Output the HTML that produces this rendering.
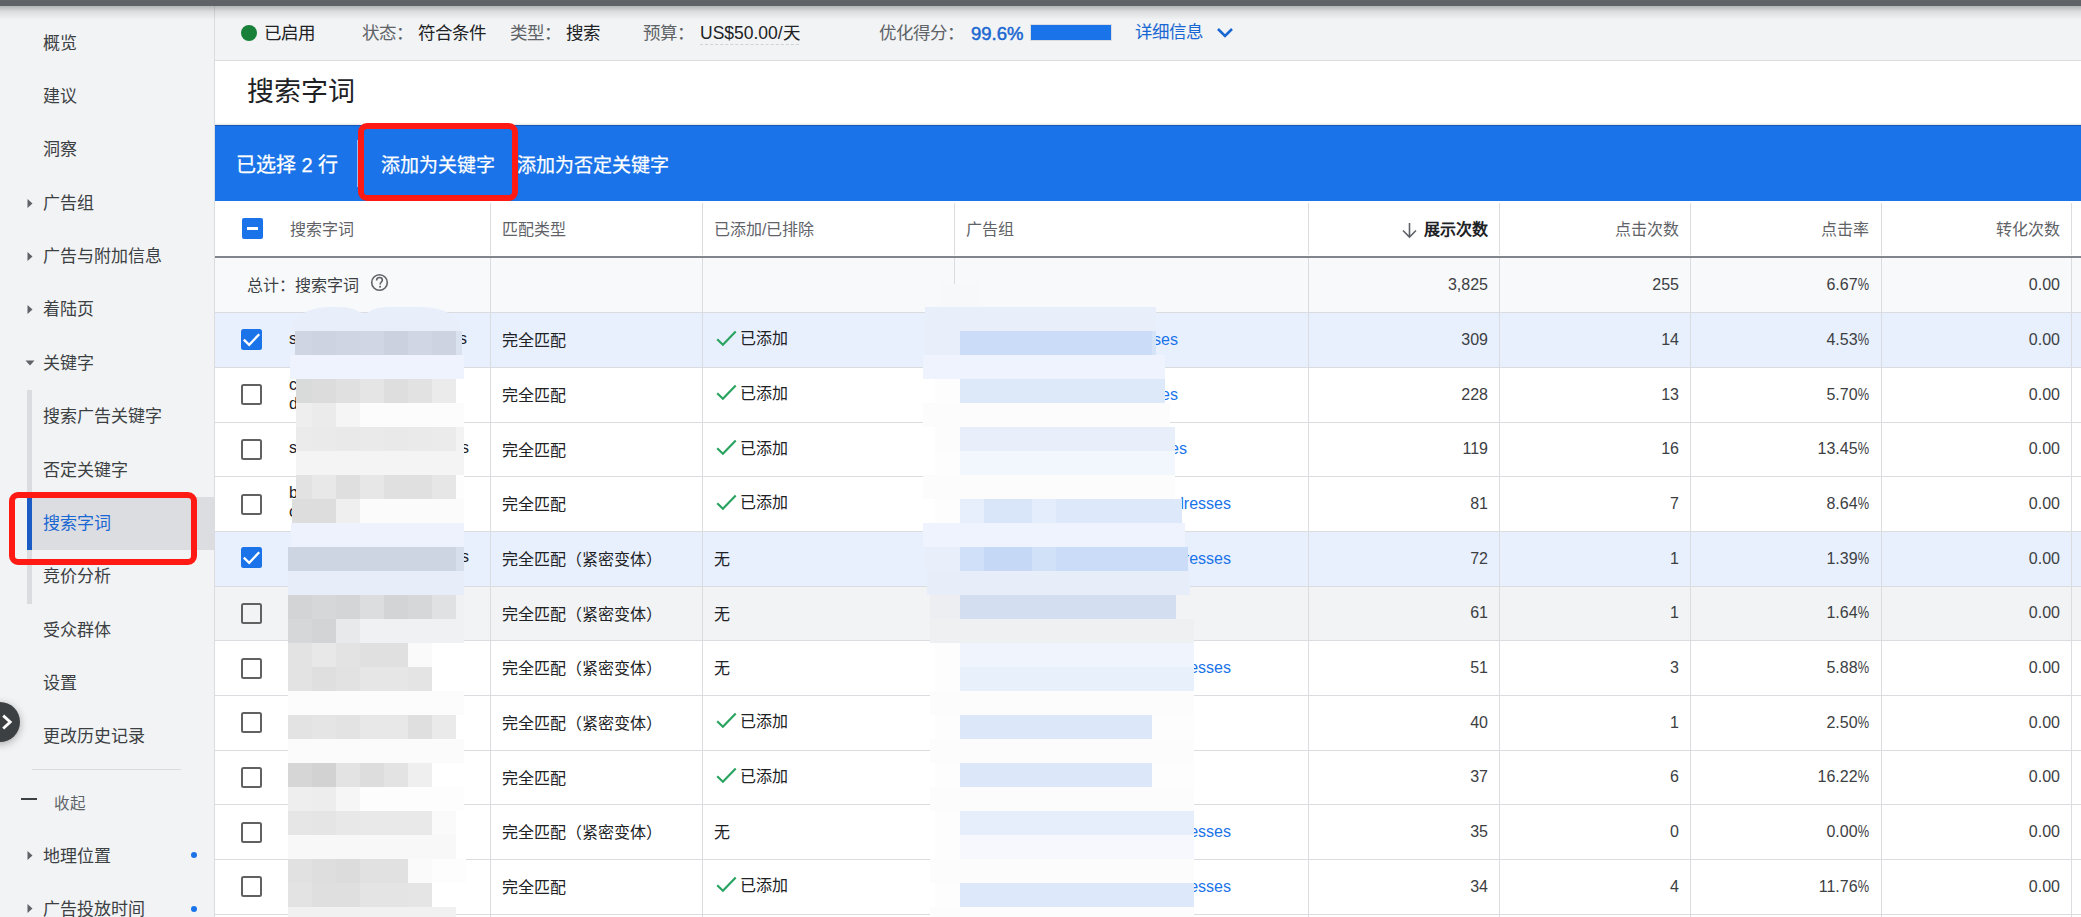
<!DOCTYPE html>
<html lang="zh-CN"><head><meta charset="utf-8"><style>
html,body{margin:0;padding:0;}
body{width:2081px;height:917px;overflow:hidden;position:relative;background:#f1f3f4;font-family:"Liberation Sans", sans-serif;}
.t{position:absolute;line-height:1;white-space:nowrap;}
.r{position:absolute;}
</style></head><body>

<div class="r" style="left:215px;top:61px;width:1866px;height:64px;background:#ffffff;"></div>
<div class="r" style="left:215px;top:60px;width:1866px;height:1px;background:#dadce0;"></div>
<div class="r" style="left:214px;top:6px;width:1px;height:911px;background:#dadce0;"></div>
<div class="r" style="left:215px;top:125px;width:1866px;height:76px;background:#1a73e8;"></div>
<div class="r" style="left:215px;top:125px;width:1866px;height:1px;background:#1559b8;"></div>
<div class="r" style="left:215px;top:123px;width:1866px;height:2px;background:linear-gradient(to bottom, rgba(0,0,0,0), rgba(0,0,0,0.12));"></div>
<div class="r" style="left:215px;top:201px;width:1866px;height:55px;background:#ffffff;"></div>
<div class="r" style="left:215px;top:256px;width:1866px;height:2px;background:#80868b;"></div>
<div class="r" style="left:215px;top:258px;width:1866px;height:54px;background:#f8f9fa;"></div>
<div class="r" style="left:215px;top:312px;width:1866px;height:55px;background:#e8f0fe;"></div>
<div class="r" style="left:215px;top:312px;width:1866px;height:1px;background:#dadce0;"></div>
<div class="r" style="left:215px;top:367px;width:1866px;height:55px;background:#ffffff;"></div>
<div class="r" style="left:215px;top:367px;width:1866px;height:1px;background:#dadce0;"></div>
<div class="r" style="left:215px;top:422px;width:1866px;height:54px;background:#ffffff;"></div>
<div class="r" style="left:215px;top:422px;width:1866px;height:1px;background:#dadce0;"></div>
<div class="r" style="left:215px;top:476px;width:1866px;height:55px;background:#ffffff;"></div>
<div class="r" style="left:215px;top:476px;width:1866px;height:1px;background:#dadce0;"></div>
<div class="r" style="left:215px;top:531px;width:1866px;height:55px;background:#e8f0fe;"></div>
<div class="r" style="left:215px;top:531px;width:1866px;height:1px;background:#dadce0;"></div>
<div class="r" style="left:215px;top:586px;width:1866px;height:54px;background:#f1f3f4;"></div>
<div class="r" style="left:215px;top:586px;width:1866px;height:1px;background:#dadce0;"></div>
<div class="r" style="left:215px;top:640px;width:1866px;height:55px;background:#ffffff;"></div>
<div class="r" style="left:215px;top:640px;width:1866px;height:1px;background:#dadce0;"></div>
<div class="r" style="left:215px;top:695px;width:1866px;height:55px;background:#ffffff;"></div>
<div class="r" style="left:215px;top:695px;width:1866px;height:1px;background:#dadce0;"></div>
<div class="r" style="left:215px;top:750px;width:1866px;height:54px;background:#ffffff;"></div>
<div class="r" style="left:215px;top:750px;width:1866px;height:1px;background:#dadce0;"></div>
<div class="r" style="left:215px;top:804px;width:1866px;height:55px;background:#ffffff;"></div>
<div class="r" style="left:215px;top:804px;width:1866px;height:1px;background:#dadce0;"></div>
<div class="r" style="left:215px;top:859px;width:1866px;height:55px;background:#ffffff;"></div>
<div class="r" style="left:215px;top:859px;width:1866px;height:1px;background:#dadce0;"></div>
<div class="r" style="left:215px;top:914px;width:1866px;height:54px;background:#ffffff;"></div>
<div class="r" style="left:215px;top:914px;width:1866px;height:1px;background:#dadce0;"></div>
<div class="r" style="left:490px;top:203px;width:1px;height:52px;background:#dadce0;"></div>
<div class="r" style="left:490px;top:258px;width:1px;height:659px;background:#dadce0;"></div>
<div class="r" style="left:702px;top:203px;width:1px;height:52px;background:#dadce0;"></div>
<div class="r" style="left:702px;top:258px;width:1px;height:659px;background:#dadce0;"></div>
<div class="r" style="left:954px;top:203px;width:1px;height:52px;background:#dadce0;"></div>
<div class="r" style="left:954px;top:258px;width:1px;height:659px;background:#dadce0;"></div>
<div class="r" style="left:1308px;top:203px;width:1px;height:52px;background:#dadce0;"></div>
<div class="r" style="left:1308px;top:258px;width:1px;height:659px;background:#dadce0;"></div>
<div class="r" style="left:1499px;top:203px;width:1px;height:52px;background:#dadce0;"></div>
<div class="r" style="left:1499px;top:258px;width:1px;height:659px;background:#dadce0;"></div>
<div class="r" style="left:1690px;top:203px;width:1px;height:52px;background:#dadce0;"></div>
<div class="r" style="left:1690px;top:258px;width:1px;height:659px;background:#dadce0;"></div>
<div class="r" style="left:1881px;top:203px;width:1px;height:52px;background:#dadce0;"></div>
<div class="r" style="left:1881px;top:258px;width:1px;height:659px;background:#dadce0;"></div>
<div class="r" style="left:2071px;top:203px;width:1px;height:52px;background:#dadce0;"></div>
<div class="r" style="left:2071px;top:258px;width:1px;height:659px;background:#dadce0;"></div>
<div class="r" style="left:0px;top:0px;width:2081px;height:6px;background:#5f6368;"></div>
<div class="r" style="left:0px;top:6px;width:2081px;height:14px;background:linear-gradient(to bottom, rgba(60,64,67,0.35), rgba(60,64,67,0.12) 40%, rgba(60,64,67,0));"></div>
<div class="r" style="left:241px;top:25px;width:16px;height:16px;border-radius:50%;background:#188038"></div>
<div class="t" style="left:264px;top:25px;font-size:17.5px;color:#202124;">已启用</div>
<div class="t" style="left:362px;top:25px;font-size:17.5px;color:#5f6368;">状态：</div>
<div class="t" style="left:418px;top:25px;font-size:17.5px;color:#202124;">符合条件</div>
<div class="t" style="left:510px;top:25px;font-size:17.5px;color:#5f6368;">类型：</div>
<div class="t" style="left:566px;top:25px;font-size:17.5px;color:#202124;">搜索</div>
<div class="t" style="left:643px;top:25px;font-size:17.5px;color:#5f6368;">预算：</div>
<div class="t" style="left:700px;top:25px;font-size:17.5px;color:#202124;">US$50.00/天</div>
<div class="r" style="left:700px;top:44px;width:99px;height:0;border-top:1px dashed #cfd2d6"></div>
<div class="t" style="left:879px;top:25px;font-size:17.5px;color:#5f6368;">优化得分：</div>
<div class="t" style="left:971px;top:24.5px;font-size:18.5px;color:#1967d2;-webkit-text-stroke:0.5px #1967d2;">99.6%</div>
<div class="r" style="left:1030px;top:24px;width:80px;height:15px;border:1px solid #dadce0;background:#1a73e8"></div>
<div class="t" style="left:1135px;top:24px;font-size:17.5px;color:#1967d2;">详细信息</div>
<svg class="r" style="left:1215px;top:26px" width="20" height="14" viewBox="0 0 20 14"><path d="M3 3 L10 10 L17 3" fill="none" stroke="#1967d2" stroke-width="2.6"/></svg>
<div class="t" style="left:247px;top:79px;font-size:27px;color:#202124;">搜索字词</div>
<div class="t" style="left:236px;top:154.5px;font-size:20px;color:#ffffff;-webkit-text-stroke:0.25px #fff;">已选择 2 行</div>
<div class="r" style="left:357px;top:140px;width:1px;height:47px;background:rgba(255,255,255,0.55);"></div>
<div class="t" style="left:381px;top:155.5px;font-size:19px;color:#ffffff;-webkit-text-stroke:0.25px #fff;">添加为关键字</div>
<div class="t" style="left:517px;top:155.5px;font-size:19px;color:#ffffff;-webkit-text-stroke:0.25px #fff;">添加为否定关键字</div>
<div class="r" style="left:358px;top:123px;width:148px;height:66px;border:6px solid #ff1a14;border-radius:9px"></div>
<div class="r" style="left:242px;top:218px;width:21px;height:21px;border-radius:2px;background:#1a73e8"></div>
<div class="r" style="left:247px;top:227px;width:11px;height:3px;background:#ffffff;"></div>
<div class="t" style="left:290px;top:222px;font-size:16px;color:#5f6368;">搜索字词</div>
<div class="t" style="left:502px;top:222px;font-size:16px;color:#5f6368;">匹配类型</div>
<div class="t" style="left:714px;top:222px;font-size:16px;color:#5f6368;">已添加/已排除</div>
<div class="t" style="left:966px;top:222px;font-size:16px;color:#5f6368;">广告组</div>
<svg class="r" style="left:1401px;top:221px" width="17" height="18" viewBox="0 0 17 18"><path d="M8.5 2 V16 M2 9.5 L8.5 16 L15 9.5" fill="none" stroke="#5f6368" stroke-width="1.6"/></svg>
<div class="t" style="right:593px;top:222px;font-size:16px;color:#202124;text-align:right;font-weight:bold;">展示次数</div>
<div class="t" style="right:402px;top:222px;font-size:16px;color:#5f6368;text-align:right;">点击次数</div>
<div class="t" style="right:212px;top:222px;font-size:16px;color:#5f6368;text-align:right;">点击率</div>
<div class="t" style="right:21px;top:222px;font-size:16px;color:#5f6368;text-align:right;">转化次数</div>
<div class="t" style="left:247px;top:278px;font-size:16px;color:#3c4043;">总计：搜索字词</div>
<svg class="r" style="left:370px;top:273px" width="19" height="19" viewBox="0 0 19 19"><circle cx="9.5" cy="9.5" r="7.8" fill="none" stroke="#5f6368" stroke-width="1.6"/><path d="M6.6 7.4 C6.6 5.6 7.9 4.5 9.5 4.5 C11.1 4.5 12.4 5.6 12.4 7.1 C12.4 8.9 10.1 9.1 10.1 11.4" fill="none" stroke="#5f6368" stroke-width="1.6"/><rect x="9.2" y="12.8" width="1.8" height="1.8" fill="#5f6368"/></svg>
<div class="t" style="right:593px;top:277px;font-size:16px;color:#3c4043;text-align:right;">3,825</div>
<div class="t" style="right:402px;top:277px;font-size:16px;color:#3c4043;text-align:right;">255</div>
<div class="t" style="right:212px;top:277px;font-size:16px;color:#3c4043;text-align:right;">6.67<span style="display:inline-block;transform:scaleX(0.8);transform-origin:100% 50%;margin-left:-2.8px">%</span></div>
<div class="t" style="right:21px;top:277px;font-size:16px;color:#3c4043;text-align:right;">0.00</div>
<svg class="r" style="left:241px;top:329px" width="21" height="21" viewBox="0 0 21 21"><rect x="0" y="0" width="21" height="21" rx="2.5" fill="#1a73e8"/><path d="M2.8 10.6 L8.2 15.8 L18.2 5.2" fill="none" stroke="#fff" stroke-width="2.3"/></svg>
<div class="t" style="left:502px;top:333px;font-size:16px;color:#202124;">完全匹配</div>
<svg class="r" style="left:715px;top:330px" width="24" height="18" viewBox="0 0 24 18"><path d="M2.2 9.3 L7.9 14.7 L20.7 1.6" fill="none" stroke="#29a35f" stroke-width="2.2"/></svg>
<div class="t" style="left:740px;top:331px;font-size:16px;color:#202124;">已添加</div>
<div class="t" style="right:593px;top:332px;font-size:16px;color:#3c4043;text-align:right;">309</div>
<div class="t" style="right:402px;top:332px;font-size:16px;color:#3c4043;text-align:right;">14</div>
<div class="t" style="right:212px;top:332px;font-size:16px;color:#3c4043;text-align:right;">4.53<span style="display:inline-block;transform:scaleX(0.8);transform-origin:100% 50%;margin-left:-2.8px">%</span></div>
<div class="t" style="right:21px;top:332px;font-size:16px;color:#3c4043;text-align:right;">0.00</div>
<div class="r" style="left:241px;top:384px;width:17px;height:17px;border:2px solid #616161;border-radius:2.5px"></div>
<div class="t" style="left:502px;top:388px;font-size:16px;color:#202124;">完全匹配</div>
<svg class="r" style="left:715px;top:384px" width="24" height="18" viewBox="0 0 24 18"><path d="M2.2 9.3 L7.9 14.7 L20.7 1.6" fill="none" stroke="#29a35f" stroke-width="2.2"/></svg>
<div class="t" style="left:740px;top:386px;font-size:16px;color:#202124;">已添加</div>
<div class="t" style="right:593px;top:387px;font-size:16px;color:#3c4043;text-align:right;">228</div>
<div class="t" style="right:402px;top:387px;font-size:16px;color:#3c4043;text-align:right;">13</div>
<div class="t" style="right:212px;top:387px;font-size:16px;color:#3c4043;text-align:right;">5.70<span style="display:inline-block;transform:scaleX(0.8);transform-origin:100% 50%;margin-left:-2.8px">%</span></div>
<div class="t" style="right:21px;top:387px;font-size:16px;color:#3c4043;text-align:right;">0.00</div>
<div class="r" style="left:241px;top:439px;width:17px;height:17px;border:2px solid #616161;border-radius:2.5px"></div>
<div class="t" style="left:502px;top:443px;font-size:16px;color:#202124;">完全匹配</div>
<svg class="r" style="left:715px;top:439px" width="24" height="18" viewBox="0 0 24 18"><path d="M2.2 9.3 L7.9 14.7 L20.7 1.6" fill="none" stroke="#29a35f" stroke-width="2.2"/></svg>
<div class="t" style="left:740px;top:441px;font-size:16px;color:#202124;">已添加</div>
<div class="t" style="right:593px;top:441px;font-size:16px;color:#3c4043;text-align:right;">119</div>
<div class="t" style="right:402px;top:441px;font-size:16px;color:#3c4043;text-align:right;">16</div>
<div class="t" style="right:212px;top:441px;font-size:16px;color:#3c4043;text-align:right;">13.45<span style="display:inline-block;transform:scaleX(0.8);transform-origin:100% 50%;margin-left:-2.8px">%</span></div>
<div class="t" style="right:21px;top:441px;font-size:16px;color:#3c4043;text-align:right;">0.00</div>
<div class="r" style="left:241px;top:494px;width:17px;height:17px;border:2px solid #616161;border-radius:2.5px"></div>
<div class="t" style="left:502px;top:497px;font-size:16px;color:#202124;">完全匹配</div>
<svg class="r" style="left:715px;top:494px" width="24" height="18" viewBox="0 0 24 18"><path d="M2.2 9.3 L7.9 14.7 L20.7 1.6" fill="none" stroke="#29a35f" stroke-width="2.2"/></svg>
<div class="t" style="left:740px;top:495px;font-size:16px;color:#202124;">已添加</div>
<div class="t" style="right:593px;top:496px;font-size:16px;color:#3c4043;text-align:right;">81</div>
<div class="t" style="right:402px;top:496px;font-size:16px;color:#3c4043;text-align:right;">7</div>
<div class="t" style="right:212px;top:496px;font-size:16px;color:#3c4043;text-align:right;">8.64<span style="display:inline-block;transform:scaleX(0.8);transform-origin:100% 50%;margin-left:-2.8px">%</span></div>
<div class="t" style="right:21px;top:496px;font-size:16px;color:#3c4043;text-align:right;">0.00</div>
<svg class="r" style="left:241px;top:547px" width="21" height="21" viewBox="0 0 21 21"><rect x="0" y="0" width="21" height="21" rx="2.5" fill="#1a73e8"/><path d="M2.8 10.6 L8.2 15.8 L18.2 5.2" fill="none" stroke="#fff" stroke-width="2.3"/></svg>
<div class="t" style="left:502px;top:552px;font-size:16px;color:#202124;">完全匹配（紧密变体）</div>
<div class="t" style="left:714px;top:552px;font-size:16px;color:#202124;">无</div>
<div class="t" style="right:593px;top:551px;font-size:16px;color:#3c4043;text-align:right;">72</div>
<div class="t" style="right:402px;top:551px;font-size:16px;color:#3c4043;text-align:right;">1</div>
<div class="t" style="right:212px;top:551px;font-size:16px;color:#3c4043;text-align:right;">1.39<span style="display:inline-block;transform:scaleX(0.8);transform-origin:100% 50%;margin-left:-2.8px">%</span></div>
<div class="t" style="right:21px;top:551px;font-size:16px;color:#3c4043;text-align:right;">0.00</div>
<div class="r" style="left:241px;top:603px;width:17px;height:17px;border:2px solid #616161;border-radius:2.5px"></div>
<div class="t" style="left:502px;top:607px;font-size:16px;color:#202124;">完全匹配（紧密变体）</div>
<div class="t" style="left:714px;top:607px;font-size:16px;color:#202124;">无</div>
<div class="t" style="right:593px;top:605px;font-size:16px;color:#3c4043;text-align:right;">61</div>
<div class="t" style="right:402px;top:605px;font-size:16px;color:#3c4043;text-align:right;">1</div>
<div class="t" style="right:212px;top:605px;font-size:16px;color:#3c4043;text-align:right;">1.64<span style="display:inline-block;transform:scaleX(0.8);transform-origin:100% 50%;margin-left:-2.8px">%</span></div>
<div class="t" style="right:21px;top:605px;font-size:16px;color:#3c4043;text-align:right;">0.00</div>
<div class="r" style="left:241px;top:658px;width:17px;height:17px;border:2px solid #616161;border-radius:2.5px"></div>
<div class="t" style="left:502px;top:661px;font-size:16px;color:#202124;">完全匹配（紧密变体）</div>
<div class="t" style="left:714px;top:661px;font-size:16px;color:#202124;">无</div>
<div class="t" style="right:593px;top:660px;font-size:16px;color:#3c4043;text-align:right;">51</div>
<div class="t" style="right:402px;top:660px;font-size:16px;color:#3c4043;text-align:right;">3</div>
<div class="t" style="right:212px;top:660px;font-size:16px;color:#3c4043;text-align:right;">5.88<span style="display:inline-block;transform:scaleX(0.8);transform-origin:100% 50%;margin-left:-2.8px">%</span></div>
<div class="t" style="right:21px;top:660px;font-size:16px;color:#3c4043;text-align:right;">0.00</div>
<div class="r" style="left:241px;top:712px;width:17px;height:17px;border:2px solid #616161;border-radius:2.5px"></div>
<div class="t" style="left:502px;top:716px;font-size:16px;color:#202124;">完全匹配（紧密变体）</div>
<svg class="r" style="left:715px;top:712px" width="24" height="18" viewBox="0 0 24 18"><path d="M2.2 9.3 L7.9 14.7 L20.7 1.6" fill="none" stroke="#29a35f" stroke-width="2.2"/></svg>
<div class="t" style="left:740px;top:714px;font-size:16px;color:#202124;">已添加</div>
<div class="t" style="right:593px;top:715px;font-size:16px;color:#3c4043;text-align:right;">40</div>
<div class="t" style="right:402px;top:715px;font-size:16px;color:#3c4043;text-align:right;">1</div>
<div class="t" style="right:212px;top:715px;font-size:16px;color:#3c4043;text-align:right;">2.50<span style="display:inline-block;transform:scaleX(0.8);transform-origin:100% 50%;margin-left:-2.8px">%</span></div>
<div class="t" style="right:21px;top:715px;font-size:16px;color:#3c4043;text-align:right;">0.00</div>
<div class="r" style="left:241px;top:767px;width:17px;height:17px;border:2px solid #616161;border-radius:2.5px"></div>
<div class="t" style="left:502px;top:771px;font-size:16px;color:#202124;">完全匹配</div>
<svg class="r" style="left:715px;top:767px" width="24" height="18" viewBox="0 0 24 18"><path d="M2.2 9.3 L7.9 14.7 L20.7 1.6" fill="none" stroke="#29a35f" stroke-width="2.2"/></svg>
<div class="t" style="left:740px;top:769px;font-size:16px;color:#202124;">已添加</div>
<div class="t" style="right:593px;top:769px;font-size:16px;color:#3c4043;text-align:right;">37</div>
<div class="t" style="right:402px;top:769px;font-size:16px;color:#3c4043;text-align:right;">6</div>
<div class="t" style="right:212px;top:769px;font-size:16px;color:#3c4043;text-align:right;">16.22<span style="display:inline-block;transform:scaleX(0.8);transform-origin:100% 50%;margin-left:-2.8px">%</span></div>
<div class="t" style="right:21px;top:769px;font-size:16px;color:#3c4043;text-align:right;">0.00</div>
<div class="r" style="left:241px;top:822px;width:17px;height:17px;border:2px solid #616161;border-radius:2.5px"></div>
<div class="t" style="left:502px;top:825px;font-size:16px;color:#202124;">完全匹配（紧密变体）</div>
<div class="t" style="left:714px;top:825px;font-size:16px;color:#202124;">无</div>
<div class="t" style="right:593px;top:824px;font-size:16px;color:#3c4043;text-align:right;">35</div>
<div class="t" style="right:402px;top:824px;font-size:16px;color:#3c4043;text-align:right;">0</div>
<div class="t" style="right:212px;top:824px;font-size:16px;color:#3c4043;text-align:right;">0.00<span style="display:inline-block;transform:scaleX(0.8);transform-origin:100% 50%;margin-left:-2.8px">%</span></div>
<div class="t" style="right:21px;top:824px;font-size:16px;color:#3c4043;text-align:right;">0.00</div>
<div class="r" style="left:241px;top:876px;width:17px;height:17px;border:2px solid #616161;border-radius:2.5px"></div>
<div class="t" style="left:502px;top:880px;font-size:16px;color:#202124;">完全匹配</div>
<svg class="r" style="left:715px;top:876px" width="24" height="18" viewBox="0 0 24 18"><path d="M2.2 9.3 L7.9 14.7 L20.7 1.6" fill="none" stroke="#29a35f" stroke-width="2.2"/></svg>
<div class="t" style="left:740px;top:878px;font-size:16px;color:#202124;">已添加</div>
<div class="t" style="right:593px;top:879px;font-size:16px;color:#3c4043;text-align:right;">34</div>
<div class="t" style="right:402px;top:879px;font-size:16px;color:#3c4043;text-align:right;">4</div>
<div class="t" style="right:212px;top:879px;font-size:16px;color:#3c4043;text-align:right;">11.76<span style="display:inline-block;transform:scaleX(0.8);transform-origin:100% 50%;margin-left:-2.8px">%</span></div>
<div class="t" style="right:21px;top:879px;font-size:16px;color:#3c4043;text-align:right;">0.00</div>
<div class="t" style="left:289px;top:331px;font-size:16px;color:#202124">s</div>
<div class="t" style="left:459px;top:331px;font-size:16px;color:#202124">s</div>
<div class="t" style="left:289px;top:377px;font-size:16px;color:#202124">c</div>
<div class="t" style="left:289px;top:396px;font-size:16px;color:#202124">d</div>
<div class="t" style="left:289px;top:440px;font-size:16px;color:#202124">s</div>
<div class="t" style="left:461px;top:440px;font-size:16px;color:#202124">s</div>
<div class="t" style="left:289px;top:485px;font-size:16px;color:#202124">b</div>
<div class="t" style="left:289px;top:504px;font-size:16px;color:#202124">c</div>
<div class="t" style="left:461px;top:549px;font-size:16px;color:#202124">s</div>
<div class="t" style="right:903px;top:332px;font-size:16px;color:#1a73e8">dresses</div>
<div class="t" style="right:903px;top:387px;font-size:16px;color:#1a73e8">dresses</div>
<div class="t" style="right:894px;top:441px;font-size:16px;color:#1a73e8">dresses</div>
<div class="t" style="right:850px;top:496px;font-size:16px;color:#1a73e8">dresses</div>
<div class="t" style="right:850px;top:551px;font-size:16px;color:#1a73e8">dresses</div>
<div class="t" style="right:850px;top:660px;font-size:16px;color:#1a73e8">dresses</div>
<div class="t" style="right:850px;top:824px;font-size:16px;color:#1a73e8">dresses</div>
<div class="t" style="right:850px;top:879px;font-size:16px;color:#1a73e8">dresses</div>
<div class="r" style="left:291px;top:307px;width:78px;height:24px;background:#e9effa;border-radius:38px 30px 0 0/24px 18px 0 0"></div>
<div class="r" style="left:360px;top:307px;width:102px;height:24px;background:#e9effa;border-radius:26px 40px 0 0/20px 24px 0 0"></div>
<div class="r" style="left:940px;top:284px;width:40px;height:23px;background:#f7f8f9;"></div>
<div class="r" style="left:295px;top:331px;width:17px;height:24px;background:#cfd5e2;"></div>
<div class="r" style="left:312px;top:331px;width:24px;height:24px;background:#cdd3e0;"></div>
<div class="r" style="left:336px;top:331px;width:24px;height:24px;background:#cfd5e2;"></div>
<div class="r" style="left:360px;top:331px;width:24px;height:24px;background:#d0d6e3;"></div>
<div class="r" style="left:384px;top:331px;width:24px;height:24px;background:#cbd1df;"></div>
<div class="r" style="left:408px;top:331px;width:24px;height:24px;background:#d0d6e3;"></div>
<div class="r" style="left:432px;top:331px;width:24px;height:24px;background:#cdd3e0;"></div>
<div class="r" style="left:456px;top:331px;width:6px;height:24px;background:#dbe2ef;"></div>
<div class="r" style="left:290px;top:355px;width:174px;height:24px;background:#eef3fd;"></div>
<div class="r" style="left:296px;top:379px;width:16px;height:24px;background:#d9dbda;"></div>
<div class="r" style="left:312px;top:379px;width:24px;height:24px;background:#dcdcdc;"></div>
<div class="r" style="left:336px;top:379px;width:24px;height:24px;background:#e0e0e0;"></div>
<div class="r" style="left:360px;top:379px;width:24px;height:24px;background:#e5e5e5;"></div>
<div class="r" style="left:384px;top:379px;width:24px;height:24px;background:#dedede;"></div>
<div class="r" style="left:408px;top:379px;width:24px;height:24px;background:#e2e2e2;"></div>
<div class="r" style="left:432px;top:379px;width:24px;height:24px;background:#ebebeb;"></div>
<div class="r" style="left:296px;top:403px;width:16px;height:24px;background:#eeeeee;"></div>
<div class="r" style="left:312px;top:403px;width:24px;height:24px;background:#ebebeb;"></div>
<div class="r" style="left:336px;top:403px;width:24px;height:24px;background:#f5f5f5;"></div>
<div class="r" style="left:360px;top:403px;width:104px;height:24px;background:#fcfcfc;"></div>
<div class="r" style="left:296px;top:427px;width:16px;height:24px;background:#ebebeb;"></div>
<div class="r" style="left:312px;top:427px;width:24px;height:24px;background:#eaeaea;"></div>
<div class="r" style="left:336px;top:427px;width:24px;height:24px;background:#e8e9e8;"></div>
<div class="r" style="left:360px;top:427px;width:24px;height:24px;background:#eaeaea;"></div>
<div class="r" style="left:384px;top:427px;width:24px;height:24px;background:#e9e9e9;"></div>
<div class="r" style="left:408px;top:427px;width:24px;height:24px;background:#eaeaea;"></div>
<div class="r" style="left:432px;top:427px;width:24px;height:24px;background:#ebebeb;"></div>
<div class="r" style="left:456px;top:427px;width:8px;height:24px;background:#f3f3f3;"></div>
<div class="r" style="left:296px;top:451px;width:168px;height:24px;background:#f4f4f4;"></div>
<div class="r" style="left:296px;top:475px;width:16px;height:24px;background:#e2e2e2;"></div>
<div class="r" style="left:312px;top:475px;width:24px;height:24px;background:#e8e8e8;"></div>
<div class="r" style="left:336px;top:475px;width:24px;height:24px;background:#dfdfdf;"></div>
<div class="r" style="left:360px;top:475px;width:24px;height:24px;background:#e6e7e6;"></div>
<div class="r" style="left:384px;top:475px;width:24px;height:24px;background:#e0e0e0;"></div>
<div class="r" style="left:408px;top:475px;width:24px;height:24px;background:#e0e0e0;"></div>
<div class="r" style="left:432px;top:475px;width:24px;height:24px;background:#e6e6e6;"></div>
<div class="r" style="left:456px;top:475px;width:8px;height:24px;background:#fdfdfd;"></div>
<div class="r" style="left:292px;top:499px;width:44px;height:24px;background:#dcdddc;"></div>
<div class="r" style="left:336px;top:499px;width:24px;height:24px;background:#efefef;"></div>
<div class="r" style="left:360px;top:499px;width:104px;height:24px;background:#fbfbfb;"></div>
<div class="r" style="left:291px;top:523px;width:173px;height:24px;background:#edf2fc;"></div>
<div class="r" style="left:288px;top:547px;width:168px;height:24px;background:#cdd4e2;"></div>
<div class="r" style="left:456px;top:547px;width:8px;height:24px;background:#d8dfec;"></div>
<div class="r" style="left:288px;top:571px;width:176px;height:24px;background:#e8eef9;"></div>
<div class="r" style="left:288px;top:595px;width:24px;height:24px;background:#d3d4d6;"></div>
<div class="r" style="left:312px;top:595px;width:24px;height:24px;background:#d6d7d9;"></div>
<div class="r" style="left:336px;top:595px;width:24px;height:24px;background:#d4d5d7;"></div>
<div class="r" style="left:360px;top:595px;width:24px;height:24px;background:#dcdddf;"></div>
<div class="r" style="left:384px;top:595px;width:24px;height:24px;background:#d3d4d6;"></div>
<div class="r" style="left:408px;top:595px;width:24px;height:24px;background:#d6d7d9;"></div>
<div class="r" style="left:432px;top:595px;width:24px;height:24px;background:#e0e1e3;"></div>
<div class="r" style="left:456px;top:595px;width:8px;height:24px;background:#eff1f2;"></div>
<div class="r" style="left:288px;top:619px;width:24px;height:24px;background:#d6d7d9;"></div>
<div class="r" style="left:312px;top:619px;width:24px;height:24px;background:#d3d4d6;"></div>
<div class="r" style="left:336px;top:619px;width:24px;height:24px;background:#e8e9eb;"></div>
<div class="r" style="left:360px;top:619px;width:104px;height:24px;background:#f0f1f3;"></div>
<div class="r" style="left:288px;top:643px;width:24px;height:24px;background:#e3e3e3;"></div>
<div class="r" style="left:312px;top:643px;width:24px;height:24px;background:#e8e8e8;"></div>
<div class="r" style="left:336px;top:643px;width:24px;height:24px;background:#e3e3e3;"></div>
<div class="r" style="left:360px;top:643px;width:48px;height:24px;background:#dfe0df;"></div>
<div class="r" style="left:408px;top:643px;width:24px;height:24px;background:#fafafa;"></div>
<div class="r" style="left:288px;top:667px;width:24px;height:24px;background:#e3e3e3;"></div>
<div class="r" style="left:312px;top:667px;width:24px;height:24px;background:#dfdfdf;"></div>
<div class="r" style="left:336px;top:667px;width:24px;height:24px;background:#e2e2e2;"></div>
<div class="r" style="left:360px;top:667px;width:48px;height:24px;background:#e5e6e5;"></div>
<div class="r" style="left:408px;top:667px;width:24px;height:24px;background:#e4e4e4;"></div>
<div class="r" style="left:288px;top:691px;width:176px;height:24px;background:#fcfcfc;"></div>
<div class="r" style="left:288px;top:715px;width:24px;height:24px;background:#e3e3e3;"></div>
<div class="r" style="left:312px;top:715px;width:24px;height:24px;background:#e5e5e5;"></div>
<div class="r" style="left:336px;top:715px;width:24px;height:24px;background:#e3e3e3;"></div>
<div class="r" style="left:360px;top:715px;width:48px;height:24px;background:#e7e8e7;"></div>
<div class="r" style="left:408px;top:715px;width:24px;height:24px;background:#dfdfdf;"></div>
<div class="r" style="left:432px;top:715px;width:24px;height:24px;background:#e9eae9;"></div>
<div class="r" style="left:288px;top:739px;width:176px;height:24px;background:#fbfbfb;"></div>
<div class="r" style="left:288px;top:763px;width:24px;height:24px;background:#d6d6d6;"></div>
<div class="r" style="left:312px;top:763px;width:24px;height:24px;background:#d2d2d2;"></div>
<div class="r" style="left:336px;top:763px;width:24px;height:24px;background:#e3e3e3;"></div>
<div class="r" style="left:360px;top:763px;width:24px;height:24px;background:#dddddd;"></div>
<div class="r" style="left:384px;top:763px;width:24px;height:24px;background:#e3e3e3;"></div>
<div class="r" style="left:408px;top:763px;width:24px;height:24px;background:#efefef;"></div>
<div class="r" style="left:288px;top:787px;width:24px;height:24px;background:#eeeeee;"></div>
<div class="r" style="left:312px;top:787px;width:24px;height:24px;background:#ededed;"></div>
<div class="r" style="left:336px;top:787px;width:24px;height:24px;background:#f6f6f6;"></div>
<div class="r" style="left:360px;top:787px;width:104px;height:24px;background:#fdfdfd;"></div>
<div class="r" style="left:288px;top:811px;width:24px;height:24px;background:#e6e6e6;"></div>
<div class="r" style="left:312px;top:811px;width:24px;height:24px;background:#e5e5e5;"></div>
<div class="r" style="left:336px;top:811px;width:24px;height:24px;background:#e7e8e7;"></div>
<div class="r" style="left:360px;top:811px;width:72px;height:24px;background:#e9e9e9;"></div>
<div class="r" style="left:432px;top:811px;width:24px;height:24px;background:#fafafa;"></div>
<div class="r" style="left:288px;top:835px;width:168px;height:24px;background:#f8f8f8;"></div>
<div class="r" style="left:288px;top:859px;width:24px;height:24px;background:#e0e1e0;"></div>
<div class="r" style="left:312px;top:859px;width:24px;height:24px;background:#dedede;"></div>
<div class="r" style="left:336px;top:859px;width:24px;height:24px;background:#dcdcdc;"></div>
<div class="r" style="left:360px;top:859px;width:48px;height:24px;background:#e0e1e0;"></div>
<div class="r" style="left:408px;top:859px;width:24px;height:24px;background:#fafafa;"></div>
<div class="r" style="left:432px;top:859px;width:34px;height:24px;background:#fdfdfd;"></div>
<div class="r" style="left:288px;top:883px;width:24px;height:24px;background:#e3e3e3;"></div>
<div class="r" style="left:312px;top:883px;width:48px;height:24px;background:#dfdfdf;"></div>
<div class="r" style="left:360px;top:883px;width:48px;height:24px;background:#e3e4e3;"></div>
<div class="r" style="left:408px;top:883px;width:24px;height:24px;background:#e5e5e5;"></div>
<div class="r" style="left:288px;top:907px;width:168px;height:10px;background:#f1f1f1;"></div>
<div class="r" style="left:925px;top:307px;width:231px;height:24px;background:#e9effa;"></div>
<div class="r" style="left:925px;top:331px;width:35px;height:24px;background:#e8eefa;"></div>
<div class="r" style="left:960px;top:331px;width:192px;height:24px;background:#cadcf7;"></div>
<div class="r" style="left:1152px;top:331px;width:4px;height:24px;background:#d5e3f8;"></div>
<div class="r" style="left:923px;top:355px;width:242px;height:24px;background:#eef3fd;"></div>
<div class="r" style="left:935px;top:379px;width:25px;height:24px;background:#fdfdfd;"></div>
<div class="r" style="left:960px;top:379px;width:205px;height:24px;background:#dde8f9;"></div>
<div class="r" style="left:923px;top:403px;width:247px;height:24px;background:#fcfcfc;"></div>
<div class="r" style="left:935px;top:427px;width:25px;height:24px;background:#fcfcfc;"></div>
<div class="r" style="left:960px;top:427px;width:215px;height:24px;background:#e8effb;"></div>
<div class="r" style="left:935px;top:451px;width:25px;height:24px;background:#fdfdfd;"></div>
<div class="r" style="left:960px;top:451px;width:215px;height:24px;background:#f2f6fd;"></div>
<div class="r" style="left:923px;top:475px;width:252px;height:24px;background:#fcfcfc;"></div>
<div class="r" style="left:935px;top:499px;width:25px;height:24px;background:#fdfdfd;"></div>
<div class="r" style="left:960px;top:499px;width:24px;height:24px;background:#e6effb;"></div>
<div class="r" style="left:984px;top:499px;width:48px;height:24px;background:#d9e6f9;"></div>
<div class="r" style="left:1032px;top:499px;width:24px;height:24px;background:#e3edfb;"></div>
<div class="r" style="left:1056px;top:499px;width:126px;height:24px;background:#dde8fa;"></div>
<div class="r" style="left:923px;top:523px;width:262px;height:24px;background:#eef3fd;"></div>
<div class="r" style="left:925px;top:547px;width:35px;height:24px;background:#e8eefa;"></div>
<div class="r" style="left:960px;top:547px;width:24px;height:24px;background:#cfe0f8;"></div>
<div class="r" style="left:984px;top:547px;width:48px;height:24px;background:#c5d9f7;"></div>
<div class="r" style="left:1032px;top:547px;width:24px;height:24px;background:#d1e1f8;"></div>
<div class="r" style="left:1056px;top:547px;width:132px;height:24px;background:#cadcf7;"></div>
<div class="r" style="left:927px;top:571px;width:263px;height:24px;background:#e8eef9;"></div>
<div class="r" style="left:930px;top:595px;width:30px;height:24px;background:#eceef2;"></div>
<div class="r" style="left:960px;top:595px;width:216px;height:24px;background:#d3dff0;"></div>
<div class="r" style="left:930px;top:619px;width:264px;height:24px;background:#eef0f2;"></div>
<div class="r" style="left:935px;top:643px;width:25px;height:24px;background:#fdfdfd;"></div>
<div class="r" style="left:960px;top:643px;width:234px;height:24px;background:#f0f5fd;"></div>
<div class="r" style="left:935px;top:667px;width:25px;height:24px;background:#fdfdfd;"></div>
<div class="r" style="left:960px;top:667px;width:234px;height:24px;background:#e8f0fc;"></div>
<div class="r" style="left:930px;top:691px;width:264px;height:24px;background:#fcfcfc;"></div>
<div class="r" style="left:935px;top:715px;width:25px;height:24px;background:#fdfdfd;"></div>
<div class="r" style="left:960px;top:715px;width:192px;height:24px;background:#dce8fa;"></div>
<div class="r" style="left:1152px;top:715px;width:42px;height:24px;background:#fdfdfd;"></div>
<div class="r" style="left:930px;top:739px;width:264px;height:24px;background:#fcfcfc;"></div>
<div class="r" style="left:935px;top:763px;width:25px;height:24px;background:#fdfdfd;"></div>
<div class="r" style="left:960px;top:763px;width:192px;height:24px;background:#dce8fa;"></div>
<div class="r" style="left:1152px;top:763px;width:42px;height:24px;background:#fdfdfd;"></div>
<div class="r" style="left:930px;top:787px;width:264px;height:24px;background:#fcfcfc;"></div>
<div class="r" style="left:935px;top:811px;width:25px;height:24px;background:#fdfdfd;"></div>
<div class="r" style="left:960px;top:811px;width:234px;height:24px;background:#e6eefb;"></div>
<div class="r" style="left:935px;top:835px;width:25px;height:24px;background:#fdfdfd;"></div>
<div class="r" style="left:960px;top:835px;width:234px;height:24px;background:#f6f8fd;"></div>
<div class="r" style="left:930px;top:859px;width:264px;height:24px;background:#fcfcfc;"></div>
<div class="r" style="left:935px;top:883px;width:25px;height:24px;background:#fdfdfd;"></div>
<div class="r" style="left:960px;top:883px;width:234px;height:24px;background:#dde9fa;"></div>
<div class="r" style="left:930px;top:907px;width:264px;height:10px;background:#fcfcfc;"></div>
<div class="r" style="left:32px;top:497px;width:182px;height:53px;background:#dcdde1;"></div>
<div class="r" style="left:27px;top:390px;width:5px;height:214px;background:#dadce0;"></div>
<div class="r" style="left:27px;top:497px;width:5px;height:53px;background:#1a5bc4;"></div>
<div class="t" style="left:43px;top:35px;font-size:17px;color:#3c4043;">概览</div>
<div class="t" style="left:43px;top:88px;font-size:17px;color:#3c4043;">建议</div>
<div class="t" style="left:43px;top:141px;font-size:17px;color:#3c4043;">洞察</div>
<div class="t" style="left:43px;top:195px;font-size:17px;color:#3c4043;">广告组</div>
<svg class="r" style="left:26px;top:198px" width="8" height="11" viewBox="0 0 8 11"><path d="M1.5 1 L6.5 5.5 L1.5 10 Z" fill="#5f6368"/></svg>
<div class="t" style="left:43px;top:248px;font-size:17px;color:#3c4043;">广告与附加信息</div>
<svg class="r" style="left:26px;top:251px" width="8" height="11" viewBox="0 0 8 11"><path d="M1.5 1 L6.5 5.5 L1.5 10 Z" fill="#5f6368"/></svg>
<div class="t" style="left:43px;top:301px;font-size:17px;color:#3c4043;">着陆页</div>
<svg class="r" style="left:26px;top:304px" width="8" height="11" viewBox="0 0 8 11"><path d="M1.5 1 L6.5 5.5 L1.5 10 Z" fill="#5f6368"/></svg>
<div class="t" style="left:43px;top:355px;font-size:17px;color:#3c4043;">关键字</div>
<svg class="r" style="left:25px;top:360px" width="10" height="6" viewBox="0 0 10 6"><path d="M0.5 0.5 L9.5 0.5 L5 5.5 Z" fill="#5f6368"/></svg>
<div class="t" style="left:43px;top:408px;font-size:17px;color:#3c4043;">搜索广告关键字</div>
<div class="t" style="left:43px;top:462px;font-size:17px;color:#3c4043;">否定关键字</div>
<div class="t" style="left:43px;top:515px;font-size:17px;color:#1967d2;">搜索字词</div>
<div class="t" style="left:43px;top:568px;font-size:17px;color:#3c4043;">竞价分析</div>
<div class="t" style="left:43px;top:622px;font-size:17px;color:#3c4043;">受众群体</div>
<div class="t" style="left:43px;top:675px;font-size:17px;color:#3c4043;">设置</div>
<div class="t" style="left:43px;top:728px;font-size:17px;color:#3c4043;">更改历史记录</div>
<div class="r" style="left:32px;top:769px;width:149px;height:1px;background:#dadce0;"></div>
<div class="r" style="left:21px;top:798px;width:16px;height:2px;background:#3c4043;"></div>
<div class="t" style="left:54px;top:796px;font-size:15.5px;color:#5f6368;">收起</div>
<div class="t" style="left:43px;top:848px;font-size:17px;color:#3c4043;">地理位置</div>
<svg class="r" style="left:26px;top:850px" width="8" height="11" viewBox="0 0 8 11"><path d="M1.5 1 L6.5 5.5 L1.5 10 Z" fill="#5f6368"/></svg>
<div class="r" style="left:191px;top:852px;width:6px;height:6px;border-radius:50%;background:#1a73e8"></div>
<div class="t" style="left:43px;top:901px;font-size:17px;color:#3c4043;">广告投放时间</div>
<svg class="r" style="left:26px;top:903px" width="8" height="11" viewBox="0 0 8 11"><path d="M1.5 1 L6.5 5.5 L1.5 10 Z" fill="#5f6368"/></svg>
<div class="r" style="left:191px;top:906px;width:6px;height:6px;border-radius:50%;background:#1a73e8"></div>
<div class="r" style="left:9px;top:492px;width:176px;height:61px;border:6px solid #ff1a14;border-radius:9px"></div>
<div class="r" style="left:-20px;top:702px;width:40px;height:40px;border-radius:50%;background:#3c4043;box-shadow:0 2px 8px rgba(0,0,0,0.3)"></div>
<svg class="r" style="left:0px;top:712px" width="16" height="20" viewBox="0 0 16 20"><path d="M3.2 3.6 L10.2 10 L3.2 16.6" fill="none" stroke="#fff" stroke-width="2.8"/></svg>
</body></html>
